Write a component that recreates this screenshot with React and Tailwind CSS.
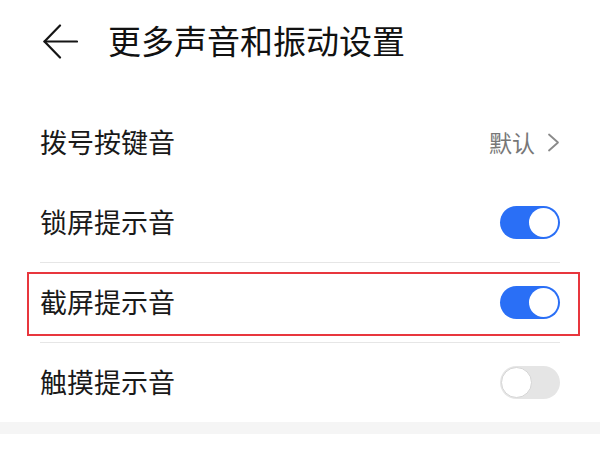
const Toggle = ({ on }) =>
  on ? (
    <div className="w-[60px] h-[33px] rounded-full bg-[#2a6ff6] flex items-center justify-end pr-[2px]">
      <div className="w-[29px] h-[29px] rounded-full bg-white" />
    </div>
  ) : (
    <div className="w-[60px] h-[33px] rounded-full bg-[#e5e5e5] flex items-center justify-start pl-[1px]">
      <div className="w-[31px] h-[31px] rounded-full bg-white border border-[#d6d6d6]" />
    </div>
  );

const Row = ({ label, children, divider, highlight }) => (
  <div className="relative">
    <div className="h-[80px] mx-[40px] flex items-center justify-between">
      <span className="text-[27px] text-[#191919]">{label}</span>
      {children}
    </div>
    {divider && <div className="mx-[40px] h-px bg-[#e6e6e6]" />}
    {highlight && (
      <div className="absolute left-[27px] right-[20px] top-[10px] bottom-[7px] border-2 border-[#e8363d]" />
    )}
  </div>
);

export default function App() {
  return (
    <div
      className="w-[600px] h-[450px] bg-white overflow-hidden"
      style={{ fontFamily: '"Noto Sans CJK SC", "Noto Sans", sans-serif' }}
    >
      {/* Header */}
      <div className="h-[82px] flex items-center pl-[43px]">
        <svg width="35" height="35" viewBox="0 0 35 35" fill="none" stroke="#151515" strokeWidth="2.2" strokeLinecap="round" strokeLinejoin="round">
          <path d="M34 17.5H1.5" />
          <path d="M17 1.5L1.5 17.5L17 33.5" />
        </svg>
        <h1 className="ml-[30px] text-[33px] text-[#111]">更多声音和振动设置</h1>
      </div>

      <div className="mt-[20px]">
        <Row label="拨号按键音">
          <div className="flex items-center gap-[12px]">
            <span className="text-[23px] text-[#777]">默认</span>
            <svg width="13" height="19" viewBox="0 0 13 19" fill="none" stroke="#8a8a8a" strokeWidth="1.8" strokeLinecap="round" strokeLinejoin="round">
              <path d="M2 1.5L11 9.5L2 17.5" />
            </svg>
          </div>
        </Row>
        <Row label="锁屏提示音" divider>
          <Toggle on />
        </Row>
        <div className="-mt-px">
          <Row label="截屏提示音" divider highlight>
            <Toggle on />
          </Row>
        </div>
        <div className="-mt-px">
          <Row label="触摸提示音">
            <Toggle />
          </Row>
        </div>
        <div className="h-[12px] bg-[#f5f5f5]" />
      </div>
    </div>
  );
}
